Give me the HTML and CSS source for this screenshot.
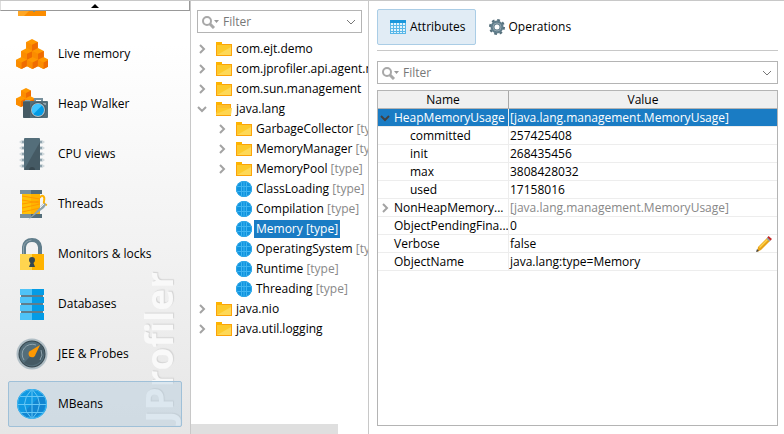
FILE: index.html
```html
<!DOCTYPE html>
<html lang="en">
<head>
<meta charset="utf-8">
<title>JProfiler</title>
<link rel="stylesheet" href="styles.css">
</head>
<body>
<svg class="sprite" aria-hidden="true">
  <symbol id="folder" viewBox="0 0 16 16">
    <path fill="#fba30a" d="M0 1h6v2h10v12H0z"/>
    <path fill="#fdca2c" d="M1 4h14v10H1z"/>
    <path fill="#fed857" d="M1 14L15 6v8z"/>
    <path fill="#ffb300" d="M0 1h6v3H0z"/>
  </symbol>
  <symbol id="folder-open" viewBox="0 0 16 16">
    <path fill="#fba30a" d="M0 1h6v2h9v12H0z"/>
    <path fill="#fdc02c" d="M1 4h13v4H1z"/>
    <path fill="#ffd54f" d="M2 7h14l-1 7H0z"/>
    <path fill="#ffca28" d="M2 7h13L0 13z"/>
    <path fill="#ffb300" d="M0 1h6v3H0z"/>
  </symbol>
  <symbol id="globe-small" viewBox="0 0 16 16">
    <circle cx="8" cy="8" r="8" fill="#0f93de"/>
    <path fill="none" stroke="#3fb4f0" d="M.5 5.500h15M.5 10.500h15M5.500 1v14M10.500 1v14M8 0v16"/>
    <circle cx="8" cy="8" r="7.500" fill="none" stroke="#2ba6e8"/>
  </symbol>
  <symbol id="search" viewBox="0 0 20 14">
    <circle cx="6" cy="6" r="4" fill="none" stroke="#a8a8a8" stroke-width="2"/>
    <path d="M9 9l4 4" stroke="#a8a8a8" stroke-width="3"/>
    <path d="M13 5h5l-2.500 3z" fill="#999"/>
  </symbol>
  <symbol id="down" viewBox="0 0 10 6">
    <path d="M1 1l4 4 4-4" fill="none" stroke="#777"/>
  </symbol>
  <symbol id="chevron" viewBox="0 0 8 10">
    <path d="M2 1l4 4-4 4" fill="none" stroke="#a3a3a3" stroke-width="2"/>
  </symbol>
  <symbol id="cube" viewBox="0 0 12 12">
    <path fill="#ff9800" d="M6 0l5 2.500v6L6 11 1 8.500v-6z"/>
    <path fill="#fb8c00" d="M1 2.500L6 5v6L1 8.500z"/>
    <path fill="#ef6c00" d="M11 2.500L6 5v6l5-2.500z"/>
  </symbol>
</svg>

<main class="app">
  <nav class="sidebar" aria-label="Views">
    <span class="watermark" aria-hidden="true">JProfiler</span>
    <button class="scroll-up" type="button" aria-label="Scroll up"><svg viewBox="0 0 8 4"><path d="M4 0l4 4H0z"/></svg></button>
    <div class="views">
      <a class="view" href="#" aria-label="Telemetries">
        <svg viewBox="0 0 32 32"><path fill="#ffa726" d="M2 4h28v24H2z"/><path fill="#fb8c00" d="M30 6v22H8z"/><path fill="#039be5" d="M13 18h10v3l-3 1-2 2-3-3z"/><path fill="#fb8c00" d="M14 16h4v4z"/></svg>
      </a>
      <a class="view" href="#">
        <svg viewBox="0 0 32 32">
          <use href="#cube" x="9" y="1" width="14" height="14"/>
          <use href="#cube" x="4" y="10" width="14" height="14"/><use href="#cube" x="15" y="10" width="14" height="14"/>
          <use href="#cube" x="-1" y="19" width="13" height="13"/><use href="#cube" x="10" y="19" width="13" height="13"/><use href="#cube" x="21" y="19" width="13" height="13"/>
        </svg>
        Live memory
      </a>
      <a class="view" href="#">
        <svg viewBox="0 0 32 32">
          <use href="#cube" x="4" y="0" width="12" height="12"/><use href="#cube" x="-1" y="8" width="12" height="12"/><use href="#cube" x="8" y="8" width="12" height="12"/>
          <path fill="#78909c" d="M18 13v-3h9v3h-2v-1h-5v1z"/>
          <rect x="7" y="13" width="25" height="17" rx="1" fill="#546e7a"/>
          <path fill="#455a64" d="M7 14h7v16H8l-1-1z"/><path fill="#90a4ae" d="M9 12h5v1H9zM27 15h3v2h-3z"/>
          <circle cx="22" cy="22" r="8" fill="#455a64"/><circle cx="22" cy="22" r="7" fill="#b0bec5"/><circle cx="22" cy="22" r="6" fill="#039be5"/><path fill="#40c4ff" d="M17.500 26A6 6 0 0 1 26 17.500z"/>
        </svg>
        Heap Walker
      </a>
      <a class="view" href="#">
        <svg viewBox="0 0 32 32">
          <path fill="#cfd8dc" d="M3 4l3-2h20l3 2-3 2H6zM3 10l3-2h20l3 2-3 2H6zM3 16l3-2h20l3 2-3 2H6zM3 22l3-2h20l3 2-3 2H6zM3 28l3-2h20l3 2-3 2H6z"/>
          <path fill="#90a4ae" d="M6 3h20v2H6zM6 9h20v2H6zM6 15h20v2H6zM6 21h20v2H6zM6 27h20v2H6z"/>
          <rect x="8" width="16" height="32" rx="1" fill="#546e7a"/><path fill="#455a64" d="M24 4v28H8z"/><path fill="#37474f" d="M13 32a3 3 0 0 1 6 0z"/>
        </svg>
        CPU views
      </a>
      <a class="view" href="#">
        <svg viewBox="0 0 32 32">
          <path fill="#ffc107" d="M6 5h18v21H6z"/><path fill="#ffb300" d="M15 5h9v21h-9z"/>
          <path fill="none" stroke="#ff9800" d="M6 8l18 3M6 12l18 3M6 16l18-3M6 20l18-4M6 24l18-4"/>
          <path fill="#78909c" d="M4 2h11v4H4zM4 26h11v4H4z"/><path fill="#546e7a" d="M15 2h11v4H15zM15 26h11v4H15z"/>
          <path fill="none" stroke="#ffb300" stroke-width="2" d="M24 10q1-3 3-2t1 5q-1 3 3 4"/>
          <path fill="#90a4ae" d="M12 32L27 16l2-1 1 2-2 3z"/><path stroke="#eceff1" d="M24 20l4-4"/>
        </svg>
        Threads
      </a>
      <a class="view" href="#">
        <svg viewBox="0 0 32 32">
          <path fill="none" stroke="#607d8b" stroke-width="4" d="M8 17V9q1-7 8-7t8 7v8"/><path fill="none" stroke="#90a4ae" d="M7.500 17V9q1-6 8-7"/>
          <path fill="#ffd54f" d="M4 16h12v16H4z"/><path fill="#ffb300" d="M16 16h12v16H16z"/>
          <path fill="#37474f" d="M13 22a3 3 0 0 1 6 0q0 2-1.500 3l1.500 4h-6l1.500-4Q13 24 13 22z"/>
        </svg>
        Monitors &amp; locks
      </a>
      <a class="view" href="#">
        <svg viewBox="0 0 32 32">
          <path fill="#607d8b" d="M5 3h22v26H5z"/>
          <path fill="#4fc3f7" d="M4 1h12v6H4zM4 9h12v6H4zM4 17h12v6H4zM4 25h12v7H4z"/>
          <path fill="#039be5" d="M16 1h12v6H16zM16 9h12v6H16zM16 17h12v6H16zM16 25h12v7H16z"/>
        </svg>
        Databases
      </a>
      <a class="view" href="#">
        <svg viewBox="0 0 32 32">
          <circle cx="16" cy="16" r="15.500" fill="#b0bec5"/><circle cx="16" cy="16" r="13.500" fill="#37474f"/><circle cx="16" cy="16" r="12.500" fill="#546e7a"/>
          <path fill="#455a64" d="M25 7a12.500 12.500 0 0 1-17 18z"/>
          <path fill="none" stroke="#90a4ae" d="M8 22a10 10 0 0 1 12-15M25 12a10 10 0 0 1-1 10"/>
          <path fill="#ff9800" d="M24 7l-4.500 9.500a3.500 3.500 0 1 1-4.500-4z"/>
        </svg>
        JEE &amp; Probes
      </a>
      <a class="view selected" href="#" aria-current="page">
        <svg viewBox="0 0 32 32">
          <circle cx="16" cy="16" r="15" fill="#1099e2"/><path fill="#1286d2" d="M26.500 5.500A15 15 0 0 1 5.500 26.500z"/>
          <path fill="none" stroke="#67c7f5" d="M1.500 16.500h29M4 8.500h24M4 24.500h24M16 1v30M16 1Q1 16 16 31M16 1q15 15 0 30"/>
          <circle cx="16" cy="16" r="14.500" fill="none" stroke="#48b7ef"/>
        </svg>
        MBeans
      </a>
    </div>
  </nav>

  <section class="browser" aria-label="MBean browser">
    <div class="filter">
      <svg class="search"><use href="#search"/></svg>
      <input type="text" placeholder="Filter" aria-label="Filter MBeans">
      <button type="button" aria-label="Filter history"><svg class="down"><use href="#down"/></svg></button>
    </div>
    <ul class="tree">
      <li><div class="node"><svg class="chevron"><use href="#chevron"/></svg><svg class="icon"><use href="#folder"/></svg><span>com.ejt.demo</span></div></li>
      <li><div class="node"><svg class="chevron"><use href="#chevron"/></svg><svg class="icon"><use href="#folder"/></svg><span>com.jprofiler.api.agent.m</span></div></li>
      <li><div class="node"><svg class="chevron"><use href="#chevron"/></svg><svg class="icon"><use href="#folder"/></svg><span>com.sun.management</span></div></li>
      <li><div class="node"><svg class="chevron open"><use href="#chevron"/></svg><svg class="icon"><use href="#folder-open"/></svg><span>java.lang</span></div>
        <ul>
          <li><div class="node"><svg class="chevron"><use href="#chevron"/></svg><svg class="icon"><use href="#folder"/></svg><span>GarbageCollector <em>[type]</em></span></div></li>
          <li><div class="node"><svg class="chevron"><use href="#chevron"/></svg><svg class="icon"><use href="#folder"/></svg><span>MemoryManager <em>[type]</em></span></div></li>
          <li><div class="node"><svg class="chevron"><use href="#chevron"/></svg><svg class="icon"><use href="#folder"/></svg><span>MemoryPool <em>[type]</em></span></div></li>
          <li><div class="node leaf"><svg class="icon"><use href="#globe-small"/></svg><span>ClassLoading <em>[type]</em></span></div></li>
          <li><div class="node leaf"><svg class="icon"><use href="#globe-small"/></svg><span>Compilation <em>[type]</em></span></div></li>
          <li><div class="node leaf chosen"><svg class="icon"><use href="#globe-small"/></svg><span>Memory <em>[type]</em></span></div></li>
          <li><div class="node leaf"><svg class="icon"><use href="#globe-small"/></svg><span>OperatingSystem <em>[type]</em></span></div></li>
          <li><div class="node leaf"><svg class="icon"><use href="#globe-small"/></svg><span>Runtime <em>[type]</em></span></div></li>
          <li><div class="node leaf"><svg class="icon"><use href="#globe-small"/></svg><span>Threading <em>[type]</em></span></div></li>
        </ul>
      </li>
      <li><div class="node"><svg class="chevron"><use href="#chevron"/></svg><svg class="icon"><use href="#folder"/></svg><span>java.nio</span></div></li>
      <li><div class="node"><svg class="chevron"><use href="#chevron"/></svg><svg class="icon"><use href="#folder"/></svg><span>java.util.logging</span></div></li>
    </ul>
    <div class="scrollbar"></div>
  </section>

  <section class="details" aria-label="MBean details">
    <div class="tabs">
      <button class="tab active" type="button">
        <svg class="icon" viewBox="0 0 16 16"><path fill="#e1f3fc" d="M0 1h16v14H0z"/><path fill="#1a97dc" d="M0 1h16v3H0z"/><path fill="none" stroke="#58b7e8" d="M.5 4v11M3.500 4v11M6.500 4v11M9.500 4v11M12.500 4v11M15.500 4v11M0 6.500h16M0 9.500h16M0 12.500h16M0 14.500h16"/></svg>
        Attributes
      </button>
      <button class="tab" type="button">
        <svg class="icon" viewBox="0 0 16 16"><circle cx="8" cy="8" r="7" fill="none" stroke="#546e7a" stroke-width="2" stroke-dasharray="2.750 2.750"/><circle cx="8" cy="8" r="4.500" fill="none" stroke="#607d8b" stroke-width="4"/><circle cx="8" cy="8" r="4" fill="none" stroke="#90a4ae"/></svg>
        Operations
      </button>
    </div>
    <div class="filter">
      <svg class="search"><use href="#search"/></svg>
      <input type="text" placeholder="Filter" aria-label="Filter attributes">
      <button type="button" aria-label="Filter history"><svg class="down"><use href="#down"/></svg></button>
    </div>
    <div class="table-frame">
      <table>
        <thead><tr><th class="name">Name</th><th>Value</th></tr></thead>
        <tbody>
          <tr class="chosen"><td><svg class="chevron open"><use href="#chevron"/></svg>HeapMemoryUsage</td><td>[java.lang.management.MemoryUsage]</td></tr>
          <tr class="child"><td>committed</td><td>257425408</td></tr>
          <tr class="child"><td>init</td><td>268435456</td></tr>
          <tr class="child"><td>max</td><td>3808428032</td></tr>
          <tr class="child"><td>used</td><td>17158016</td></tr>
          <tr><td><svg class="chevron"><use href="#chevron"/></svg>NonHeapMemory...</td><td class="muted">[java.lang.management.MemoryUsage]</td></tr>
          <tr><td>ObjectPendingFina...</td><td>0</td></tr>
          <tr><td>Verbose</td><td><div class="editable">false<button type="button" aria-label="Edit value"><svg viewBox="0 0 16 16"><path fill="#e8a317" d="M2 11L11 2l3 3-9 9-4 2z"/><path fill="#ffd54f" d="M3 11l8-8 1 1-8 8z"/><path fill="#c62828" d="M11 2l1.500-2L16 3l-2 2z"/><path fill="#90a4ae" d="M10.500 2.500l1-1 3 3-1 1z"/><path fill="#444" d="M0 16l1-3 2 2z"/></svg></button></div></td></tr>
          <tr><td>ObjectName</td><td>java.lang:type=Memory</td></tr>
        </tbody>
      </table>
    </div>
  </section>
</main>
</body>
</html>
```
FILE: styles.css
```css
* { box-sizing: border-box; }

body {
  margin: 0;
  font: 12px/18px "Open Sans", "Noto Sans", sans-serif;
  color: #000;
  background: #fff;
}

button, input { font: inherit; color: inherit; border: 0; background: none; padding: 0; }
svg { display: block; flex: none; }
ul { list-style: none; margin: 0; padding: 0; }
em { font-style: normal; color: #888; }

.sprite { position: absolute; width: 0; height: 0; }

.app {
  display: grid;
  grid-template-columns: 190px 179px 1fr;
  height: 100vh;
  border-top: 1px solid #c8c8c8;
}

/* View selector */
.sidebar {
  position: relative;
  display: flex;
  flex-direction: column;
  min-height: 0;
  background: linear-gradient(#fff 10%, #e6e6e6);
}

.scroll-up {
  display: flex;
  justify-content: center;
  align-items: center;
  height: 10px;
  flex: none;
  background: #fff;
  border: 1px solid #999;
  border-top: 0;
  border-left-color: #ddd;
}
.scroll-up svg { width: 8px; height: 4px; }

.views {
  position: relative;
  flex: 1;
  min-height: 0;
  overflow: hidden;
  display: flex;
  flex-direction: column;
  justify-content: flex-end;
  gap: 4px;
  padding: 0 8px 7px;
}

.view {
  display: flex;
  align-items: center;
  gap: 10px;
  flex: none;
  height: 46px;
  padding: 0 7px;
  border: 1px solid transparent;
  border-radius: 2px;
  color: #000;
  text-decoration: none;
}
.view svg { width: 32px; height: 32px; }
.view.selected { background: rgba(165, 197, 222, 0.35); border-color: #9fc0d8; }

.watermark {
  position: absolute;
  right: 7px;
  bottom: 11px;
  writing-mode: vertical-rl;
  transform: rotate(180deg);
  font-size: 37px;
  line-height: 48px;
  font-weight: 700;
  color: #f9f9f9;
  text-shadow: 1px 1px 1px #d4d4d4;
}

/* MBean tree */
.browser {
  display: flex;
  flex-direction: column;
  min-width: 0;
  overflow: hidden;
  border: solid #c8c8c8;
  border-width: 0 1px;
}
.browser .filter { margin: 9px 6px 6px; }

.filter {
  display: flex;
  align-items: center;
  flex: none;
  height: 23px;
  padding: 0 5px 0 3px;
  border: 1px solid #b4b4b4;
  background: #fff;
}
.filter input { flex: 1; min-width: 0; padding-left: 2px; outline: 0; }
.filter input::placeholder { color: #777; opacity: 1; }
.search { width: 20px; height: 14px; }
.down { width: 10px; height: 6px; }

.tree { flex: 1; min-height: 0; padding-left: 7px; overflow: hidden; }
.tree ul { padding-left: 20px; }
.node { display: flex; align-items: center; height: 20px; white-space: nowrap; }
.node span { padding: 0 2px; margin-left: 2px; }
.chevron { width: 8px; height: 10px; margin-right: 10px; }
.chevron.open { transform: rotate(90deg); }
.icon { width: 16px; height: 16px; }
.leaf { padding-left: 18px; }
.chosen span { background: #1a7cc4; color: #fff; }
.chosen em { color: #fff; }
.scrollbar { width: 147px; height: 10px; flex: none; background: #dfdfdf; }

/* Attribute details */
.details {
  display: flex;
  flex-direction: column;
  min-width: 0;
  padding: 8px 6px 8px 8px;
}

.tabs {
  display: flex;
  padding-bottom: 5px;
  border-bottom: 1px solid #c8c8c8;
}
.tab {
  display: flex;
  align-items: center;
  gap: 4px;
  height: 36px;
  padding: 0 9px 0 12px;
  border: 1px solid transparent;
  border-radius: 2px;
}
.tab.active { background: #e1ecf5; border-color: #aacde6; }

.details .filter { margin: 10px 0 6px; }

.table-frame { flex: 1; min-height: 0; overflow: hidden; border: 1px solid #b4b4b4; }

table { width: 100%; table-layout: fixed; border-collapse: separate; border-spacing: 0; }
th {
  height: 18px;
  padding: 0;
  font-weight: 400;
  line-height: 17px;
  background: #f0f0f0;
  border-bottom: 1px solid #b4b4b4;
}
th.name { width: 131px; border-right: 1px solid #a8a8a8; }
td {
  position: relative;
  height: 18px;
  padding: 0 1px;
  line-height: 17px;
  white-space: nowrap;
  overflow: hidden;
  border-bottom: 1px solid #ededed;
}
td:first-child { padding: 0 0 0 16px; border-right: 1px solid #ededed; }
.child td:first-child { padding-left: 32px; }
.muted { color: #888; }
tr.chosen td { background: #1a7cc4; color: #fff; }
td .chevron { position: absolute; left: 3px; top: 4px; }
tr.chosen .chevron { filter: brightness(0.4); }
.editable { display: flex; justify-content: space-between; height: 17px; padding-right: 4px; }
.editable svg { width: 16px; height: 16px; }
```
